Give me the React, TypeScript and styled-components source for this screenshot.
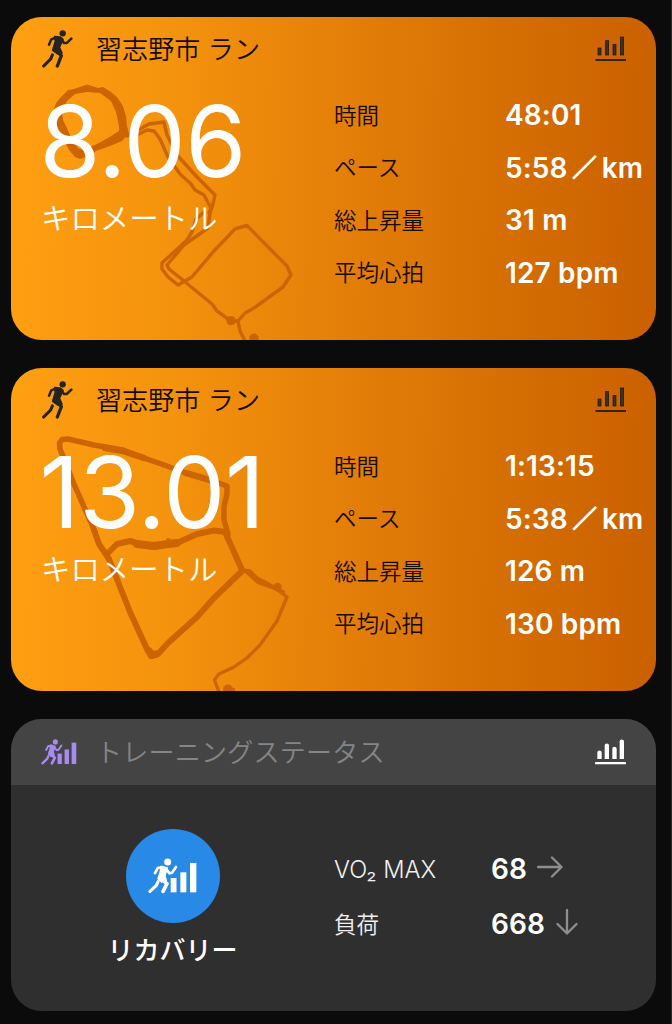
import React from 'react';
import styled, { createGlobalStyle } from 'styled-components';

const GlobalStyle = createGlobalStyle`
  * { box-sizing: border-box; }
  body {
    margin: 0;
    background: #0b0b0b;
    font-family: Inter, "Noto Sans CJK JP", sans-serif;
  }
`;

const Page = styled.main`
  width: 672px;
  height: 1024px;
  padding: 17px 0 0 11px;
  border-right: 1px solid #2a2a2a;
  overflow: hidden;
  display: flex;
  flex-direction: column;
  gap: 28px;
`;

const Card = styled.section`
  width: 645px;
  border-radius: 31px;
  overflow: hidden;
  flex: none;
`;

const RunCard = styled(Card)`
  position: relative;
  height: 323px;
  background: linear-gradient(91deg, #ff9f12 0%, #f4930d 25%, #e58009 50%, #d66f03 75%, #ca6000 100%);
`;

const StatusCard = styled(Card)`
  height: 292px;
  background: #2f2f2f;
`;

const Header = styled.header<{ $bar?: boolean }>`
  position: relative;
  display: flex;
  align-items: center;
  height: ${p => (p.$bar ? 66 : 64)}px;
  padding: 0 30px;
  background: ${p => (p.$bar ? '#444' : 'transparent')};
`;

const IconSlot = styled.div`
  display: flex;
  width: 55px;
`;

const Title = styled.h2<{ $muted?: boolean }>`
  flex: 1;
  margin: 0;
  padding-top: 1px;
  font-size: 26px;
  font-weight: 350;
  letter-spacing: ${p => (p.$muted ? 0.25 : 0.1)}px;
  line-height: 36px;
  color: ${p => (p.$muted ? '#858585' : '#160b00')};
`;

const RunBody = styled.div`
  position: relative;
  display: grid;
  grid-template-columns: 293px 1fr;
  padding: 8px 0 0 30px;
`;

const Distance = styled.div`
  font-size: 98.5px;
  line-height: 100px;
  height: 109px;
  margin-top: 3px;
  margin-left: -1.5px;
  letter-spacing: -0.3px;
  color: #fff;
`;

const Unit = styled.div`
  font-size: 29.4px;
  line-height: 36px;
  font-weight: 350;
  color: #fff;
`;

const Stats = styled.dl`
  margin: 0;
`;

const Stat = styled.div<{ $height: number; $label: number }>`
  display: grid;
  grid-template-columns: ${p => p.$label}px 1fr;
  align-items: center;
  height: ${p => p.$height}px;
`;

const Label = styled.dt<{ $light?: boolean }>`
  padding-top: ${p => (p.$light ? 2 : 1)}px;
  font-size: 22.5px;
  font-weight: 350;
  line-height: 32px;
  white-space: nowrap;
  color: ${p => (p.$light ? '#f0f0f0' : '#160b00')};
`;

const Value = styled.dd`
  display: flex;
  align-items: center;
  margin: 0;
  font-size: 28px;
  font-weight: 600;
  letter-spacing: 0.15px;
  line-height: 34px;
  white-space: nowrap;
  color: #fff;
`;

const Slash = styled.span`
  width: 34px;
  padding-bottom: 3px;
  text-align: center;
  font-family: "Noto Sans CJK JP", sans-serif;
  font-size: 24px;
  font-weight: 700;
  -webkit-text-stroke: 1.3px #fff;
`;

const Route = styled.svg`
  position: absolute;
  inset: 0;
  width: 645px;
  height: 323px;
`;

const StatusBody = styled.div`
  display: grid;
  grid-template-columns: 323px 1fr;
`;

const StatusSummary = styled.div`
  display: flex;
  flex-direction: column;
  align-items: center;
  padding-top: 44px;
`;

const StatusBadge = styled.div`
  display: flex;
  align-items: center;
  justify-content: center;
  width: 94px;
  height: 94px;
  border-radius: 50%;
  background: #2889e6;
`;

const StatusName = styled.div`
  margin-top: 10px;
  font-size: 26px;
  line-height: 36px;
  font-weight: 500;
  color: #fff;
`;

const StatusStats = styled(Stats)`
  padding-top: 56px;
`;

const VoLabel = styled.span`
  font-size: 23.7px;
`;

const Trend = styled.svg`
  margin-left: 10px;
  margin-top: -3px;
  fill: none;
  stroke: #8e8e8e;
  stroke-width: 2.3;
  stroke-linecap: round;
  stroke-linejoin: round;
`;

function RunnerIcon() {
  return (
    <svg width="32" height="38" viewBox="127 92 96 114" fill="none" stroke="#262420" strokeLinecap="round" strokeLinejoin="round">
      <circle cx="192" cy="102" r="9.5" fill="#262420" stroke="none" />
      <path d="M172 114L158 120L151 136" strokeWidth="7.5" />
      <path d="M168 112L184 113L193 120L182 144L190 161L178 164L162 153L170 126Z" fill="#262420" strokeWidth="5" />
      <path d="M188 120L196 131L204 131L218 118" strokeWidth="7.5" />
      <path d="M171 152L188 169L176 200" strokeWidth="10" />
      <path d="M161 167L156 179L135 200" strokeWidth="9.5" />
    </svg>
  );
}

function TrainingIcon({ width, color }: { width: number; color: string }) {
  return (
    <svg width={width} height={(width * 106) / 146} viewBox="446 474 146 106" fill="none" stroke={color} strokeLinecap="round" strokeLinejoin="round">
      <circle cx="505" cy="486" r="10.5" fill={color} stroke="none" />
      <path d="M490 501L475 504L467 519" strokeWidth="8" />
      <path d="M485 500L503 504L496 527L500 541L487 545L477 536L484 514Z" fill={color} strokeWidth="6" />
      <path d="M501 507L510 520L518 518L530 501" strokeWidth="8" />
      <path d="M485 536L503 551L491 574" strokeWidth="11" />
      <path d="M476 545L471 556L452 574" strokeWidth="9.5" />
      <g fill={color} stroke="none">
        <rect x="514" y="534" width="17.5" height="43" />
        <rect x="543" y="517" width="18" height="60" />
        <rect x="572" y="489" width="19" height="88" />
      </g>
    </svg>
  );
}

function ChartIcon({ bold = false }: { bold?: boolean }) {
  return bold ? (
    <svg width="31" height="26" viewBox="795 118 93 78" fill="#fff">
      <path d="M802 178V158a6 5 0 0 1 13 0V178ZM824 178V137a6 5 0 0 1 13 0V178ZM847 178V147a6 5 0 0 1 13 0V178ZM869 178V125a6 5 0 0 1 13 0V178Z" />
      <rect x="795" y="187" width="93" height="7" rx="2" />
    </svg>
  ) : (
    <svg width="31" height="26" viewBox="795 108 93 78" fill="#33342c" stroke="#1b1408" strokeWidth="2">
      <rect x="804" y="144" width="9" height="21" />
      <rect x="826" y="122" width="10" height="43" />
      <rect x="849" y="133" width="9" height="32" />
      <rect x="871" y="111" width="10" height="54" />
      <rect x="798" y="178" width="89" height="4" />
    </svg>
  );
}

const routeColor = '#cc6500';

function RouteOne() {
  return (
    <Route viewBox="11 17 645 323" fill="none" stroke={routeColor} strokeWidth="3.4" strokeLinejoin="round" strokeLinecap="round">
      <path
        fill={routeColor}
        fillRule="evenodd"
        stroke="none"
        d="M53 112L56 103L61 97L68 90L74 89L87 84.5L98 88L103 87L111 92L117 97L123 106L126 116L127 126L129 133L122 141L110 146L96 151L90 156L80 159L75 157L69 150L63 138L57 126ZM62 112L67 101L75 94L87 92L100 93L111 101L116 112L119 126L119 131L108 138L95 145L82 150L78 148L72 140L66 126L63 120Z"
      />
      <path d="M127 136L140 129L149 124L164 122L167 135L177 155L197 177L215 195L213 204L210 213L208 228L184 245L173 258L167 265L169 269L184 281L212 304L217 311L231 321" />
      <path d="M131 138L147 130L154 131L160 139L168 157L180 174L191 184L195 190L204 195L211 208L209 213" />
      <path d="M204 212L196 219L192 232L187 240L162 263L162 269L168 277L178 285L192 277L213 252L235 229L247 225.5L271 250L287 266L291 275L283 287L254 308L245 313L238 321L240 331L245 341" />
      <path d="M231 321L238 321" />
      <g fill={routeColor} stroke="none">
        <circle cx="231" cy="320.6" r="4.7" />
        <circle cx="254" cy="338.3" r="4.7" />
      </g>
    </Route>
  );
}

function RouteTwo() {
  return (
    <Route viewBox="11 368 645 323" fill="none" stroke={routeColor} strokeWidth="5.5" strokeLinejoin="round" strokeLinecap="round">
      <path d="M95 532L74 484L60 449L59.5 443L62 439.5L68 439L94 445L123 450L144 458L167 466L186 473L213 481L227 486L227 494L224 506L224 520L228 534" />
      <path d="M105 448L123 451L144 458M186 473L213 481" strokeWidth="6.5" />
      <path d="M94 530L99 544L105 553L109 559L130 612L147 649L151 656L158 654L168 643L197 617L214 598L242 571" strokeWidth="6" />
      <path d="M242 570L234 552L225 532L214 530.5L197 534L177 543L168 544L154 547L144 545L130 541L117 544L107 554" strokeWidth="6" />
      <path d="M149 651L152 655L156 654" strokeWidth="7.5" />
      <path d="M137 544L154 546L168 544L177 543" strokeWidth="8" />
      <path d="M168 540L173 544" strokeWidth="4" />
      <path d="M242 570L250 571L257 578L265 582L275 588L287 597L277 621L260 645L247 658L234 667L219 674L214.5 680L219 692" strokeWidth="3.3" />
      <path d="M246 571L258 582L275 588L283 592" strokeWidth="4" />
      <g fill={routeColor} stroke="none">
        <circle cx="277.5" cy="587" r="4.2" />
        <circle cx="228" cy="689.5" r="5" />
        <rect x="228" y="688" width="7" height="4" />
      </g>
    </Route>
  );
}

type Run = { distance: string; stats: [string, string][]; route: React.ReactNode };

const runs: Run[] = [
  {
    distance: '8.06',
    stats: [['時間', '48:01'], ['ペース', '5:58／km'], ['総上昇量', '31 m'], ['平均心拍', '127 bpm']],
    route: <RouteOne />,
  },
  {
    distance: '13.01',
    stats: [['時間', '1:13:15'], ['ペース', '5:38／km'], ['総上昇量', '126 m'], ['平均心拍', '130 bpm']],
    route: <RouteTwo />,
  },
];

function StatValue({ text }: { text: string }) {
  const [amount, unit] = text.split('／');
  return (
    <Value>
      {amount}
      {unit && <><Slash>／</Slash>{unit}</>}
    </Value>
  );
}

export default function App() {
  return (
    <>
      <GlobalStyle />
      <Page lang="ja">
        {runs.map(run => (
          <RunCard key={run.distance}>
            {run.route}
            <Header>
              <IconSlot><RunnerIcon /></IconSlot>
              <Title>習志野市 ラン</Title>
              <ChartIcon />
            </Header>
            <RunBody>
              <div>
                <Distance>{run.distance}</Distance>
                <Unit>キロメートル</Unit>
              </div>
              <Stats>
                {run.stats.map(([label, value]) => (
                  <Stat key={label} $height={52.5} $label={171}>
                    <Label>{label}</Label>
                    <StatValue text={value} />
                  </Stat>
                ))}
              </Stats>
            </RunBody>
          </RunCard>
        ))}
        <StatusCard>
          <Header $bar>
            <IconSlot><TrainingIcon width={35.5} color="#a78bef" /></IconSlot>
            <Title $muted>トレーニングステータス</Title>
            <ChartIcon bold />
          </Header>
          <StatusBody>
            <StatusSummary>
              <StatusBadge><TrainingIcon width={48.7} color="#fff" /></StatusBadge>
              <StatusName>リカバリー</StatusName>
            </StatusSummary>
            <StatusStats>
              <Stat $height={55} $label={157}>
                <Label $light><VoLabel>VO₂ MAX</VoLabel></Label>
                <Value>
                  68
                  <Trend width="26" height="26" viewBox="0 0 26 26"><path d="M1 13H24.5M15 3.5L24.5 13L15 22.5" /></Trend>
                </Value>
              </Stat>
              <Stat $height={55} $label={157}>
                <Label $light>負荷</Label>
                <Value>
                  668
                  <Trend width="26" height="26" viewBox="0 0 26 26"><path d="M12 1V24.5M2.5 15L12 24.5L21.5 15" /></Trend>
                </Value>
              </Stat>
            </StatusStats>
          </StatusBody>
        </StatusCard>
      </Page>
    </>
  );
}
